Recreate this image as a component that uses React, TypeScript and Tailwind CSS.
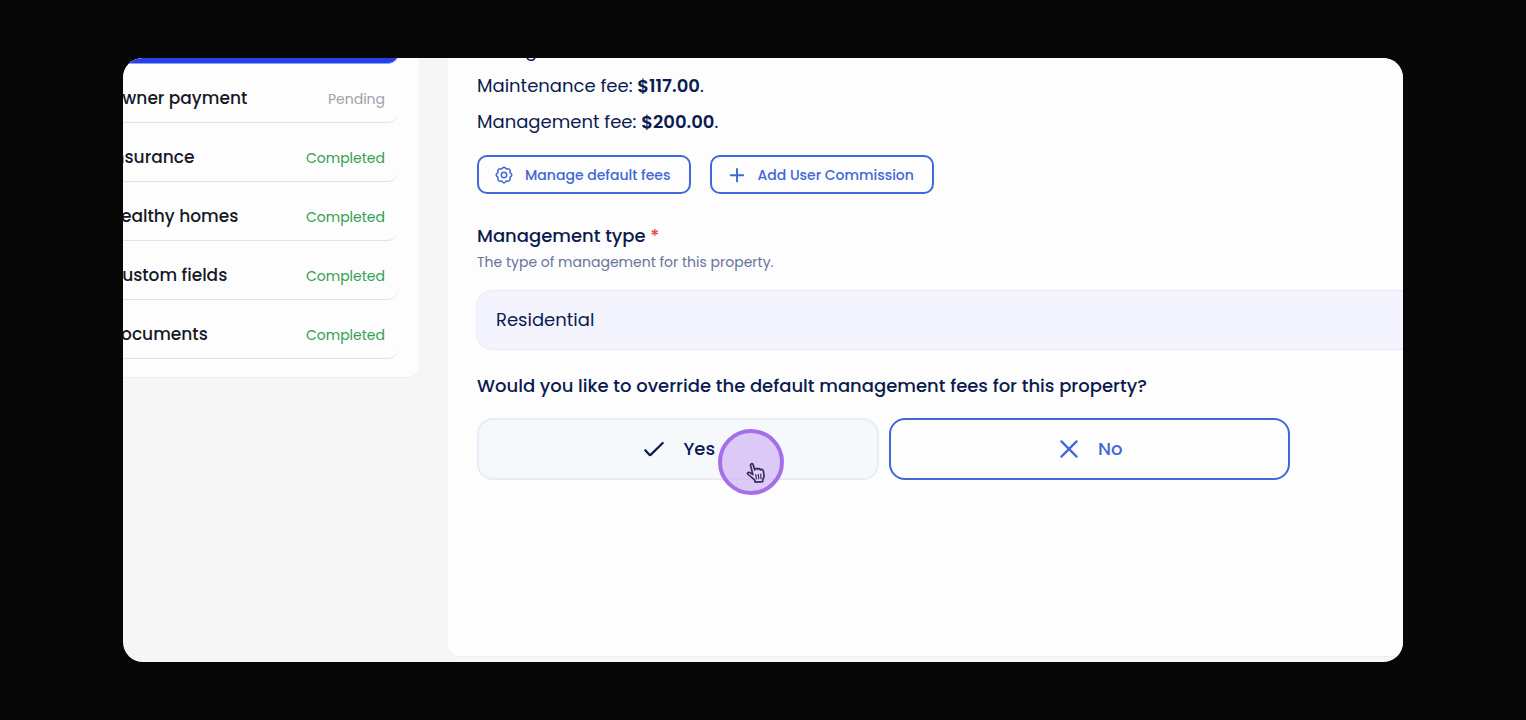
import { useState } from "react";

const sections = [
  { name: "Owner payment", status: "Pending" },
  { name: "Insurance", status: "Completed" },
  { name: "Healthy homes", status: "Completed" },
  { name: "Custom fields", status: "Completed" },
  { name: "Documents", status: "Completed" },
];

function GearIcon() {
  return (
    <svg width="18" height="18" viewBox="0 0 18 18" fill="none" stroke="currentColor" strokeWidth="1.5" strokeLinejoin="round" aria-hidden="true">
      <path d="M7.5 2.1 C8.2 .9 9.8 .9 10.5 2.1 C10.9 2.8 11.6 3.1 12.4 2.9 C13.8 2.5 15.5 4.2 15.1 5.6 C14.9 6.4 15.2 7.1 15.9 7.5 C17.1 8.2 17.1 9.8 15.9 10.5 C15.2 10.9 14.9 11.6 15.1 12.4 C15.5 13.8 13.8 15.5 12.4 15.1 C11.6 14.9 10.9 15.2 10.5 15.9 C9.8 17.1 8.2 17.1 7.5 15.9 C7.1 15.2 6.4 14.9 5.6 15.1 C4.2 15.5 2.5 13.8 2.9 12.4 C3.1 11.6 2.8 10.9 2.1 10.5 C.9 9.8 .9 8.2 2.1 7.5 C2.8 7.1 3.1 6.4 2.9 5.6 C2.5 4.2 4.2 2.5 5.6 2.9 C6.4 3.1 7.1 2.8 7.5 2.1 Z" />
      <circle cx="9" cy="9" r="2.7" />
    </svg>
  );
}

function PlusIcon() {
  return (
    <svg width="18" height="18" viewBox="0 0 18 18" fill="none" stroke="currentColor" strokeWidth="1.9" strokeLinecap="round" aria-hidden="true">
      <path d="M9 3v12.4M2.8 9.2h12.4" />
    </svg>
  );
}

function CheckIcon() {
  return (
    <svg width="20" height="20" viewBox="0 0 20 20" fill="none" stroke="currentColor" strokeWidth="2.2" strokeLinecap="round" strokeLinejoin="round" aria-hidden="true">
      <path d="M1.3 11.2 L5.2 15.6 Q6 16.4 6.9 15.6 L18.7 4" />
    </svg>
  );
}

function CrossIcon() {
  return (
    <svg width="18" height="18" viewBox="0 0 18 18" fill="none" stroke="currentColor" strokeWidth="2.2" strokeLinecap="round" aria-hidden="true">
      <path d="M1.4 1.4l15.2 15.2M16.6 1.4L1.4 16.6" />
    </svg>
  );
}

function HandCursor() {
  return (
    <svg width="20" height="22" viewBox="0 0 20 22" fill="none" stroke="#3b2a5c" strokeWidth="1.7" strokeLinejoin="round" strokeLinecap="round" aria-hidden="true">
      <path
        fill="#e3d3f9"
        d="M6.9 12.6 L4.6 3.6 C4.1 1.5 6.6 .9 7.2 2.9 L8.7 8 C8.6 6.3 11.1 5.9 11.6 7.5 C12.1 6.3 14 6.4 14.4 8 C15.2 7 17 7.5 17.3 9 L18 13.2 C18.3 15 17.2 16.5 16.8 17.6 L16.6 19.6 L9.2 20.2 L8.8 18.2 C6.8 16.5 4.8 14.2 2 12.4 C.7 11.2 2.4 9.7 4 10.6 Z"
      />
      <path strokeWidth="1.2" d="M9.8 12.6l.5 4.4M12.3 12.4l.4 4.4M14.8 12.2l.2 4.4" />
    </svg>
  );
}

export default function App() {
  const [type, setType] = useState("Residential");

  return (
    <div className="flex min-h-screen bg-[#070707] px-[123px] py-[58px] font-[Poppins,Inter,sans-serif]">
      <div className="flex min-w-0 flex-1 items-start gap-7 overflow-hidden rounded-[20px] bg-[#f6f6f6]">
        <aside className="-mt-1.5 -ml-10 w-[336px] shrink-0 rounded-b-xl bg-[#fdfdfd] pr-5 pb-[18px] shadow-[0_1px_1px_rgba(0,0,0,0.03)]">
          <div className="h-3 rounded-br-xl border-b border-[#8fa3f3] bg-[#263fe9]" />
          <ul>
            {sections.map((section) => (
              <li key={section.name} className="flex h-[59px] items-center justify-between rounded-br-xl border-b border-[#e2e3e6] pt-3 pr-3.5 pl-[26px]">
                <a href="#" className="text-[17px] font-medium text-[#161826]">{section.name}</a>
                <span className={section.status === "Pending" ? "text-sm text-[#a0a1aa]" : "text-sm text-[#30a152]"}>
                  {section.status}
                </span>
              </li>
            ))}
          </ul>
        </aside>

        <main className="-mt-[26px] mb-1.5 ml-px w-full shrink-0 self-stretch rounded-b-xl bg-[#fdfdfd] px-[29px] text-[#0b1b50] shadow-[0_1px_1px_rgba(0,0,0,0.03)]">
          <div className="text-lg leading-9">
            <p>Letting fee: <b className="font-semibold">$0.00</b>.</p>
            <p>Maintenance fee: <b className="font-semibold">$117.00</b>.</p>
            <p>Management fee: <b className="font-semibold">$200.00</b>.</p>
          </div>

          <div className="mt-[15px] flex gap-[19px] text-sm font-medium text-[#3f68d8]">
            <button className="flex h-[39px] items-center gap-3 rounded-[10px] border-2 border-[#3f68d8] pr-[18px] pl-4">
              <GearIcon />
              Manage default fees
            </button>
            <button className="flex h-[39px] items-center gap-3 rounded-[10px] border-2 border-[#3f68d8] pr-[18px] pl-4">
              <PlusIcon />
              Add User Commission
            </button>
          </div>

          <label htmlFor="management-type" className="mt-7 block text-lg font-medium">
            Management type <span className="text-[#e5484d]">*</span>
          </label>
          <p className="text-sm leading-6 text-[#68739a]">The type of management for this property.</p>
          <select
            id="management-type"
            value={type}
            onChange={(e) => setType(e.target.value)}
            className="mt-4 -ml-px block h-[60px] w-full appearance-none rounded-2xl border border-[#ebebf7] bg-[#f4f4fe] px-[19px] text-lg"
          >
            <option>Residential</option>
            <option>Commercial</option>
          </select>

          <h2 className="mt-[22px] text-lg font-medium">Would you like to override the default management fees for this property?</h2>
          <div className="mt-[18px] grid max-w-[813px] grid-cols-2 gap-2.5 text-lg font-medium">
            <button className="relative flex h-[62px] items-center justify-center gap-[19px] rounded-2xl border-2 border-[#ebebf8] bg-[#f6f9fc] pl-1">
              <CheckIcon />
              Yes
              <span className="absolute top-[9px] left-[239px] size-[66px] rounded-full border-4 border-[#a66ee8] bg-[#c9a8f3]/60" />
              <span className="absolute top-[42px] left-[267px]">
                <HandCursor />
              </span>
            </button>
            <button className="flex h-[62px] items-center justify-center gap-5 rounded-2xl border-2 border-[#3f68d8] pl-1 text-[#3f68d8]">
              <CrossIcon />
              No
            </button>
          </div>
        </main>
      </div>
    </div>
  );
}
